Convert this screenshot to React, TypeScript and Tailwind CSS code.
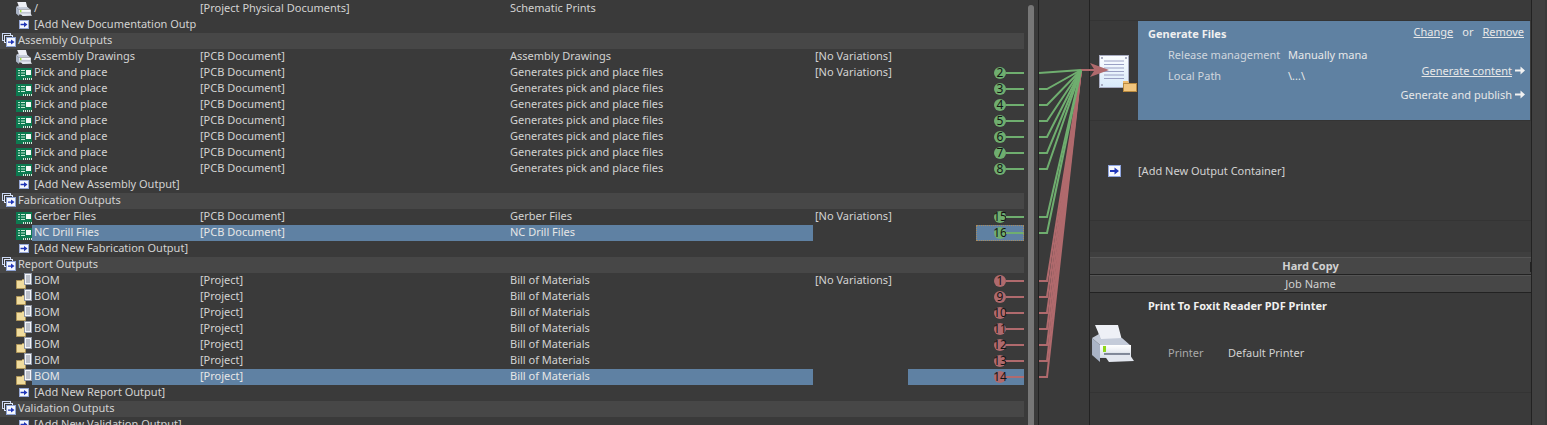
const GREEN = "#6fae6f";
const RED = "#b06a6d";

function AddIcon({ w = 10, h = 9 }: { w?: number; h?: number }) {
  return (
    <svg width={w} height={h} viewBox="0 0 13 12" preserveAspectRatio="none" className="shrink-0">
      <rect x="0.500" y="0.500" width="12" height="11" fill="#f4f7fd" stroke="#8fa5e0" />
      <path d="M2 5h4.500V2.500L11 6 6.500 9.500V7H2z" fill="#1f35b8" />
    </svg>
  );
}

function GroupIcon() {
  return (
    <svg width="14" height="14" viewBox="0 0 14 14" className="shrink-0">
      <rect x="0.500" y="0.500" width="8" height="7" fill="#3a3a3a" stroke="#c9d6f2" />
      <rect x="2.500" y="2.500" width="8" height="7" fill="#3a3a3a" stroke="#dbe4f8" />
      <rect x="4.500" y="4.500" width="9" height="9" fill="#f4f7fd" stroke="#8fa5d8" />
      <path d="M6 8.500h3V6.500L12.500 9 9 11.500V9.800H6z" fill="#1f35b8" />
    </svg>
  );
}

function PrinterIcon({ size = 16 }: { size?: number }) {
  return (
    <svg width={size} height={size * 0.88} viewBox="0 0 42 37" className="shrink-0">
      <defs>
        <linearGradient id="printerFront" x1="0" y1="0" x2="0" y2="1">
          <stop offset="0" stopColor="#ffffff" />
          <stop offset="1" stopColor="#d4dae6" />
        </linearGradient>
      </defs>
      <path d="M3 0h23l4 15-21 1-3-9z" fill="#eef0f6" />
      <path d="M0 13l7-4 2 5 21-1 8 7H8z" fill="#c4cbd9" />
      <path d="M8 20h31v13H8z" fill="url(#printerFront)" />
      <path d="M0 13l8 7v17l-8-7z" fill="#aab4c6" />
      <path d="M12 28h26v2H12z" fill="#7f8797" />
      <path d="M12 30h26l4 6-25 1z" fill="#e3e7ef" />
      <rect x="11" y="21" width="3" height="6" fill="#8fd61a" />
    </svg>
  );
}

function PcbIcon() {
  return (
    <svg width="16" height="12" viewBox="0 0 16 12" className="shrink-0 mt-[2px]">
      <rect x="0" y="0" width="16" height="12" fill="#0c7a50" />
      <path d="M2 2.500h2M2 5h2M2 7.500h2M5 2.500h4M5 5h4M5 7.500h4" stroke="#c6ecd6" strokeWidth="1" />
      <rect x="10" y="2" width="5" height="5" fill="#f6faf7" />
      <rect x="7" y="10" width="9" height="2" fill="#2a5a45" />
      <path d="M7.500 10v2M9.500 10v2M11.500 10v2M13.500 10v2M15.500 10v2" stroke="#d5ece0" strokeWidth="1" />
    </svg>
  );
}

function BomIcon() {
  return (
    <svg width="16" height="16" viewBox="0 0 16 16" className="shrink-0">
      <path d="M0.500 7.500h5l1-1h3v9H0.500z" fill="#f0dc9e" stroke="#b0975a" />
      <rect x="8.500" y="0.500" width="7" height="11" fill="#f4f6fa" stroke="#8f96a5" />
      <path d="M10 3h4M10 5h4M10 7h4M10 9h4" stroke="#848b9b" />
    </svg>
  );
}

function DocIcon() {
  return (
    <svg width="39" height="37" viewBox="0 0 39 37" className="shrink-0">
      <defs>
        <linearGradient id="docFill" x1="0" y1="0" x2="0" y2="1">
          <stop offset="0" stopColor="#fbfdff" />
          <stop offset="1" stopColor="#d8eafa" />
        </linearGradient>
      </defs>
      <rect x="0.500" y="0.500" width="29" height="32" fill="url(#docFill)" stroke="#a9adc2" />
      <path d="M5 6h20M5 9.500h20M5 13h20M5 16.500h20M5 20h20M5 23.500h20" stroke="#9aa0c4" />
      <path d="M2 2h2v2H2zM26 2h2v2h-2zM2 29h2v2H2z" fill="#a9adc2" />
      <path d="M24 26h5l1 2h-6z" fill="#efbd6e" />
      <rect x="24.500" y="28.500" width="13" height="8" fill="#f2c67e" stroke="#b98a3f" />
    </svg>
  );
}

function Arrow() {
  return (
    <svg width="10" height="9" viewBox="0 0 10 9" className="ml-[3px] mt-[3px] shrink-0">
      <path d="M0 3.400h5.500V0.500L10 4.500 5.500 8.500V5.600H0z" fill="#f2f2f2" />
    </svg>
  );
}

function Pin({ n, color, selected, dotted }: { n: number; color: string; selected?: boolean; dotted?: boolean }) {
  return (
    <div className={`w-[48px] h-[16px] flex items-center pl-[18px] ${selected ? "bg-[#5f81a3]" : ""} ${dotted ? "outline-1 outline-dotted outline-[#a88a5e] -outline-offset-1" : ""}`}>
      <div className="w-[12px] h-[12px] rounded-full shrink-0 flex items-center justify-center text-[#151515] text-[12px] leading-none" style={{ backgroundColor: color }}>
        {n}
      </div>
      <div className="flex-1 h-[2px]" style={{ backgroundColor: color }} />
    </div>
  );
}

type RowProps = {
  icon: React.ReactNode;
  name: string;
  doc: string;
  desc: string;
  variation?: string;
  selected?: boolean;
  wideSelect?: boolean;
  pin?: number;
  color?: string;
};

function Row({ icon, name, doc, desc, variation, selected, wideSelect, pin, color }: RowProps) {
  return (
    <div className="flex h-[16px] leading-[14px]">
      <div className="w-[32px] pl-[16px] flex items-center shrink-0">{icon}</div>
      <div className={`w-[781px] flex shrink-0 pl-[2px] ${selected ? "bg-[#5f81a3] text-[#e6e6e6]" : ""}`}>
        <span className="w-[166px] shrink-0">{name}</span>
        <span className="w-[310px] shrink-0">{doc}</span>
        <span>{desc}</span>
      </div>
      <span className="w-[95px] pl-[2px] shrink-0">{variation}</span>
      <div className={`w-[68px] shrink-0 ${wideSelect ? "bg-[#5f81a3]" : ""}`} />
      {pin !== undefined && color ? <Pin n={pin} color={color} selected={selected} dotted={selected && !wideSelect} /> : null}
    </div>
  );
}

function Group({ title }: { title: string }) {
  return (
    <div className="flex h-[16px] bg-[#474747] pl-[2px] gap-[2px] leading-[14px]">
      <GroupIcon />
      <span>{title}</span>
    </div>
  );
}

function AddRow({ label }: { label: string }) {
  return (
    <div className="flex h-[16px] pl-[19px] gap-[5px] leading-[14px]">
      <div className="h-[14px] flex items-center">
        <AddIcon />
      </div>
      <span>{label}</span>
    </div>
  );
}

function Wires() {
  const green = [73, 89, 105, 121, 137, 153, 169, 217, 233];
  const red = [281, 297, 313, 329, 345, 361, 377];
  return (
    <svg className="absolute left-[1039px] top-0 pointer-events-none" width="72" height="425" viewBox="1039 0 72 425">
      {red.map((y) => (
        <polyline key={y} points={`1039,${y} 1047,${y} 1081,70`} fill="none" stroke={RED} strokeWidth="2" />
      ))}
      <path d="M1081 69h13l-4-6 19 7-19 7 4-6h-13z" fill={RED} />
      <polyline points="1039,73 1081,70" fill="none" stroke={GREEN} strokeWidth="2" />
      {green.slice(1).map((y) => (
        <polyline key={y} points={`1039,${y} 1047,${y} 1081,70`} fill="none" stroke={GREEN} strokeWidth="2" />
      ))}
    </svg>
  );
}

export default function App() {
  const picks = [2, 3, 4, 5, 6, 7, 8];
  const boms = [1, 9, 10, 11, 12, 13, 14];
  return (
    <div className="relative flex w-[1547px] h-[425px] overflow-hidden bg-[#3a3a3a] text-[#d2d2d2] text-[11px] font-['Noto_Sans',sans-serif]">
      <div className="w-[1024px] shrink-0 pt-[1px]">
        <Row icon={<PrinterIcon />} name="/" doc="[Project Physical Documents]" desc="Schematic Prints" />
        <AddRow label="[Add New Documentation Outp" />
        <Group title="Assembly Outputs" />
        <Row icon={<PrinterIcon />} name="Assembly Drawings" doc="[PCB Document]" desc="Assembly Drawings" variation="[No Variations]" />
        {picks.map((n, i) => (
          <Row key={n} icon={<PcbIcon />} name="Pick and place" doc="[PCB Document]" desc="Generates pick and place files" variation={i === 0 ? "[No Variations]" : undefined} pin={n} color={GREEN} />
        ))}
        <AddRow label="[Add New Assembly Output]" />
        <Group title="Fabrication Outputs" />
        <Row icon={<PcbIcon />} name="Gerber Files" doc="[PCB Document]" desc="Gerber Files" variation="[No Variations]" pin={15} color={GREEN} />
        <Row icon={<PcbIcon />} name="NC Drill Files" doc="[PCB Document]" desc="NC Drill Files" selected pin={16} color={GREEN} />
        <AddRow label="[Add New Fabrication Output]" />
        <Group title="Report Outputs" />
        {boms.map((n, i) => (
          <Row key={n} icon={<BomIcon />} name="BOM" doc="[Project]" desc="Bill of Materials" variation={i === 0 ? "[No Variations]" : undefined} pin={n} color={RED} selected={n === 14} wideSelect={n === 14} />
        ))}
        <AddRow label="[Add New Report Output]" />
        <Group title="Validation Outputs" />
        <AddRow label="[Add New Validation Output]" />
      </div>

      <div className="w-[15px] shrink-0 pl-[4px] pt-[5px] border-r border-[#222222]">
        <div className="w-[6px] h-[420px] bg-[#777777] rounded-t-[3px]" />
      </div>
      <div className="w-[51px] shrink-0 border-r border-[#222222]" />

      <div className="w-[442px] shrink-0 border-r border-[#222222] flex flex-col">
        <div className="h-[21px] border-b border-[#343434]" />
        <div className="h-[100px] flex border-b border-[#343434]">
          <div className="w-[48px] shrink-0 pl-[9px] pt-[34px]">
            <DocIcon />
          </div>
          <div className="w-[392px] h-[99px] bg-[#5f81a2] flex justify-between text-[#e8e8e8]">
            <div className="pl-[10px] pt-[5px]">
              <div className="font-bold leading-[16px] text-[#f0f0f0]">Generate Files</div>
              <div className="pl-[20px] pt-[5px] grid grid-cols-[120px_1fr] gap-y-[5px] leading-[16px]">
                <span className="text-[#cfd6de]">Release management</span>
                <span>Manually mana</span>
                <span className="text-[#cfd6de]">Local Path</span>
                <span>\...\</span>
              </div>
            </div>
            <div className="flex flex-col items-end pr-[5px] pt-[3px] leading-[16px]">
              <div className="flex pr-[1px]">
                <span className="underline">Change</span>
                <span className="ml-[9px] mr-[9px]">or</span>
                <span className="underline">Remove</span>
              </div>
              <div className="flex mt-[23px]">
                <span className="underline">Generate content</span>
                <Arrow />
              </div>
              <div className="flex mt-[8px]">
                <span>Generate and publish</span>
                <Arrow />
              </div>
            </div>
          </div>
        </div>
        <div className="h-[100px] flex items-center pt-[1px] border-b border-[#343434]">
          <div className="w-[48px] shrink-0 pl-[18px]">
            <AddIcon w={13} h={12} />
          </div>
          <span>[Add New Output Container]</span>
        </div>
        <div className="h-[31px] shrink-0" />
        <div className="h-[5px] shrink-0 bg-[#3f3f3f]" />
        <div className="relative h-[18px] flex items-center justify-center bg-[#474747] border-t border-[#555555] border-b-1 border-b-[#222222] font-bold">
          Hard Copy
          <div className="absolute right-0 top-[4px] w-[1px] h-[10px] bg-[#222222]" />
        </div>
        <div className="h-[18px] flex items-center justify-center bg-[#474747] border-t border-[#555555] border-b-1 border-b-[#222222]">Job Name</div>
        <div className="h-[100px] flex border-b border-[#343434]">
          <div className="w-[48px] shrink-0 pl-[2px] pt-[32px]">
            <PrinterIcon size={42} />
          </div>
          <div className="pl-[10px] pt-[5px]">
            <div className="font-bold leading-[16px] text-[#f0f0f0]">Print To Foxit Reader PDF Printer</div>
            <div className="pl-[20px] mt-[31px] flex leading-[16px]">
              <span className="w-[60px] text-[#a9a9a9]">Printer</span>
              <span>Default Printer</span>
            </div>
          </div>
        </div>
      </div>

      <div className="w-[13px] shrink-0 bg-[#404040]" />

      <Wires />
    </div>
  );
}
